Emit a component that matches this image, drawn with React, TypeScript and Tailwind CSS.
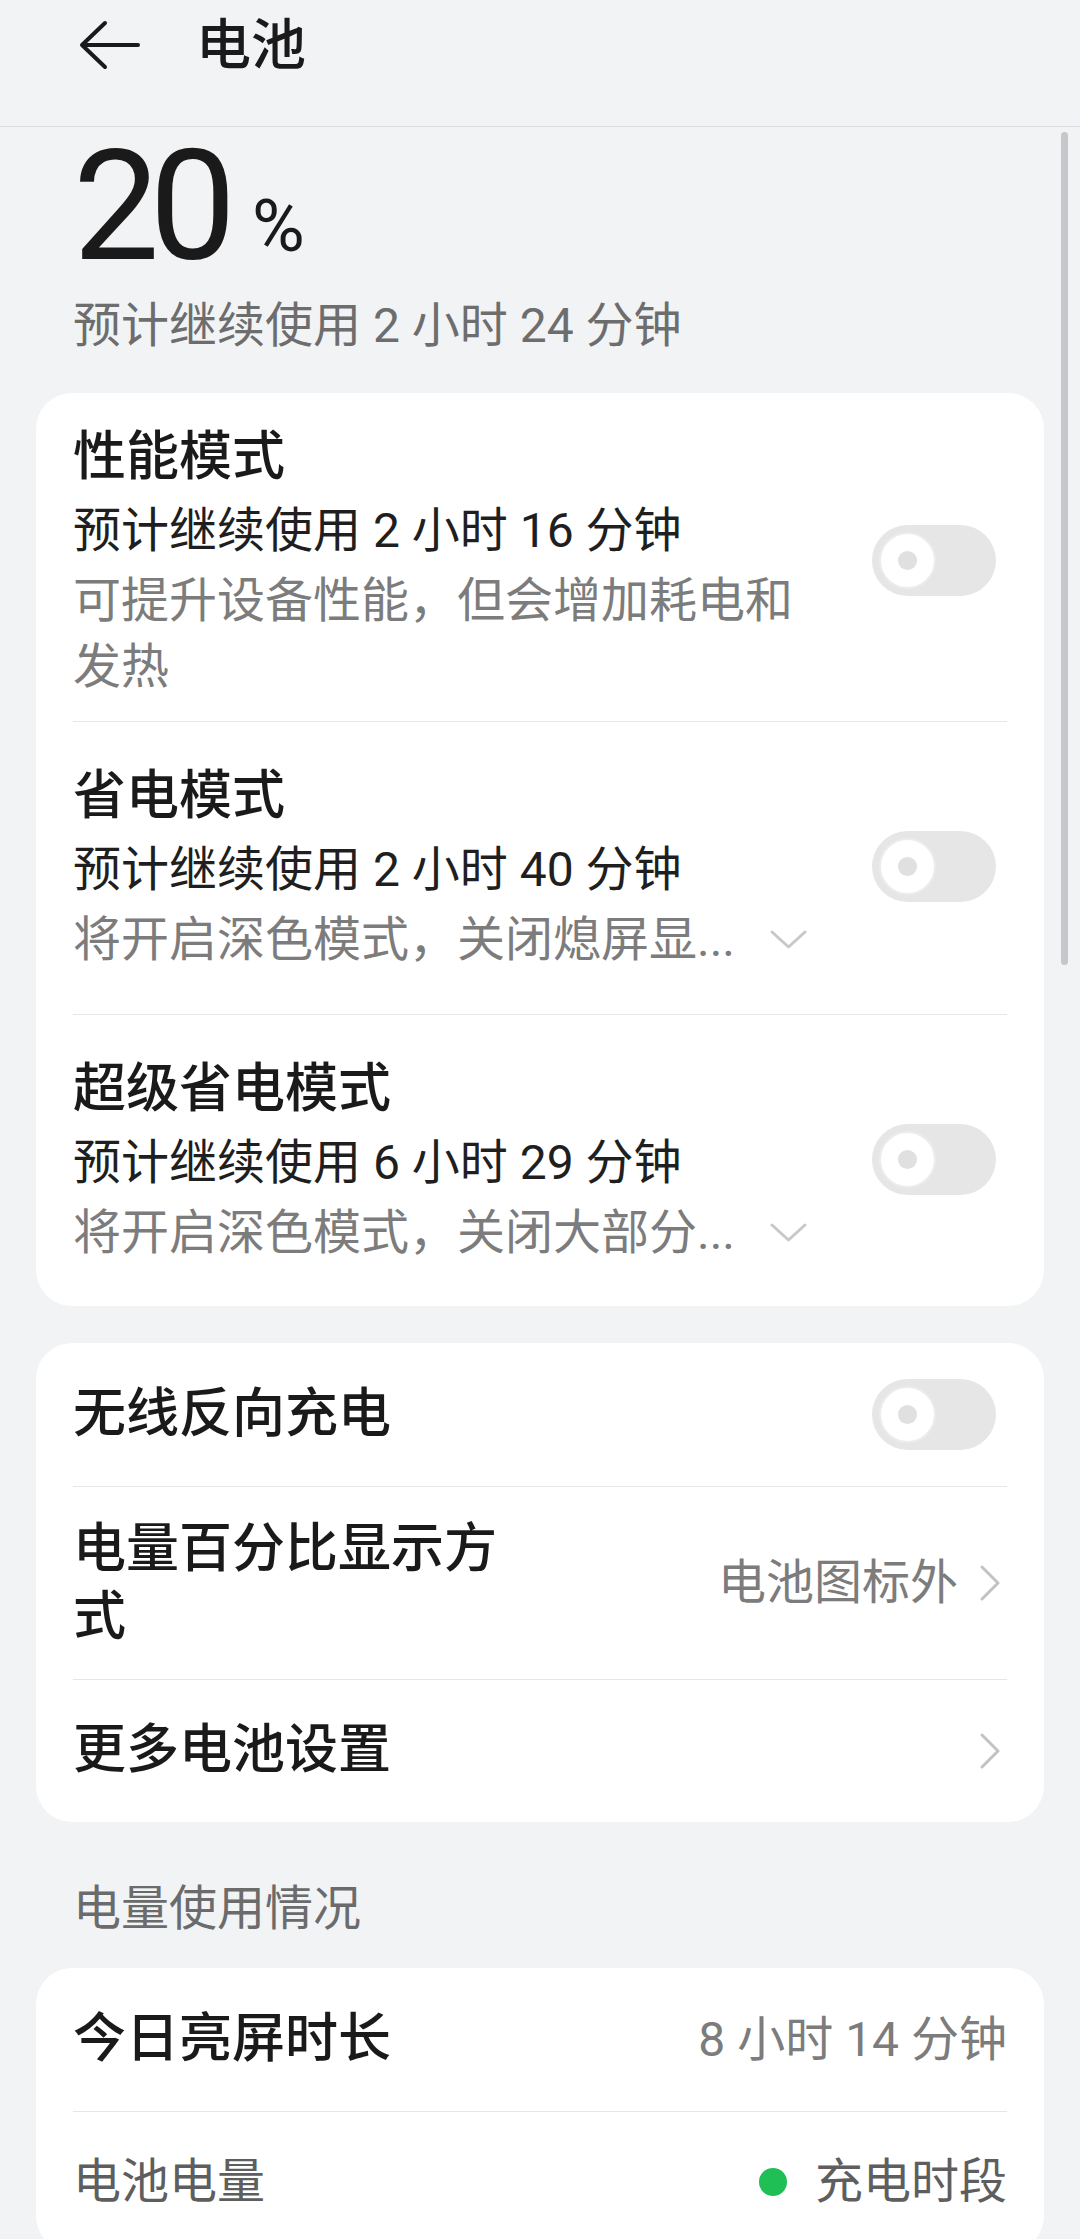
import React from "react";

const Toggle = () => (
  <div className="w-[124px] h-[71px] rounded-full bg-[#e6e6e6] flex items-center pl-[7px] shrink-0">
    <div className="w-[57px] h-[57px] rounded-full bg-white border-2 border-[#ececec] flex items-center justify-center">
      <div className="w-[19px] h-[19px] rounded-full bg-[#e0e0e0]" />
    </div>
  </div>
);

const ChevronDown = () => (
  <svg width="37" height="20" viewBox="0 0 37 20" className="shrink-0 ml-[35px]">
    <path d="M2 2 L18.5 17 L35 2" fill="none" stroke="#c8c8c8" strokeWidth="3" strokeLinecap="round" strokeLinejoin="round" />
  </svg>
);

const ChevronRight = () => (
  <svg width="20" height="36" viewBox="0 0 20 36" className="shrink-0">
    <path d="M2 2 L18 18 L2 34" fill="none" stroke="#c2c2c2" strokeWidth="3" strokeLinecap="round" strokeLinejoin="round" />
  </svg>
);

const Divider = () => <div className="h-px bg-[#e6e6e6]" />;

type Mode = {
  title: string;
  estimate: string;
  desc: string;
  folded: boolean;
  pad: string;
};

const modes: Mode[] = [
  {
    title: "性能模式",
    estimate: "预计继续使用 2 小时 16 分钟",
    desc: "可提升设备性能，但会增加耗电和发热",
    folded: false,
    pad: "pt-[27px] pb-[21px]",
  },
  {
    title: "省电模式",
    estimate: "预计继续使用 2 小时 40 分钟",
    desc: "将开启深色模式，关闭熄屏显...",
    folded: true,
    pad: "pt-[37px] pb-[41px]",
  },
  {
    title: "超级省电模式",
    estimate: "预计继续使用 6 小时 29 分钟",
    desc: "将开启深色模式，关闭大部分...",
    folded: true,
    pad: "pt-[37px] pb-[40px]",
  },
];

export default function App() {
  return (
    <div className="relative h-[2239px] w-[1080px] overflow-hidden bg-[#f1f3f5] text-[#1a1a1a] font-['Roboto','Noto_Sans_CJK_SC',sans-serif]">
      {/* header */}
      <header className="h-[127px] pb-[36px] flex items-center border-b border-[#dcdee1]">
        <svg width="62" height="50" viewBox="0 0 62 50" className="ml-[78px]">
          <path d="M60 25 H4 M27 3 L4 25 L27 47" fill="none" stroke="#1a1a1a" strokeWidth="4" strokeLinecap="round" strokeLinejoin="round" />
        </svg>
        <h1 className="ml-[56px] text-[55px] font-medium leading-none">电池</h1>
      </header>

      {/* scroll indicator */}
      <div className="absolute left-[1061px] top-[132px] w-[7px] h-[833px] rounded-full bg-[#c5c7ca]" />

      <div className="pl-[73px]">
        <div className="flex items-baseline">
          <span className="text-[154px] leading-[160px] tracking-[-10px]">20</span>
          <span className="ml-[26px] -translate-y-[8px] text-[72px] leading-none">%</span>
        </div>
        <p className="mt-[6px] text-[48px] leading-[66px] text-[#6d6d6d]">预计继续使用 2 小时 24 分钟</p>
      </div>

      {/* modes card */}
      <section className="mx-[36px] mt-[34px] rounded-[36px] bg-white px-[37px]">
        {modes.map((m, i) => (
          <div key={m.title}>
            {i > 0 && <Divider />}
            <div className={`flex items-center justify-between ${m.pad}`}>
              <div className="w-[740px]">
                <div className="text-[53px] font-medium leading-[74px]">{m.title}</div>
                <div className="text-[48px] leading-[74px] text-[#1f1f1f]">{m.estimate}</div>
                {m.folded ? (
                  <div className="flex items-center text-[48px] leading-[66px] text-[#7c7c7c]">
                    <span>{m.desc}</span>
                    <ChevronDown />
                  </div>
                ) : (
                  <div className="text-[48px] leading-[66px] text-[#7c7c7c]">{m.desc}</div>
                )}
              </div>
              <div className="mr-[11px]">
                <Toggle />
              </div>
            </div>
          </div>
        ))}
      </section>

      {/* settings card */}
      <section className="mx-[36px] mt-[37px] rounded-[36px] bg-white px-[37px]">
        <div className="h-[143px] flex items-center justify-between">
          <span className="text-[53px] font-medium">无线反向充电</span>
          <div className="mr-[11px]">
            <Toggle />
          </div>
        </div>
        <Divider />
        <div className="py-[28px] flex items-center justify-between">
          <span className="w-[440px] text-[53px] font-medium leading-[68px]">电量百分比显示方式</span>
          <div className="flex items-center gap-[22px] pr-[7px]">
            <span className="text-[48px] text-[#7c7c7c]">电池图标外</span>
            <ChevronRight />
          </div>
        </div>
        <Divider />
        <div className="h-[142px] flex items-center justify-between">
          <span className="text-[53px] font-medium">更多电池设置</span>
          <div className="pr-[7px]">
            <ChevronRight />
          </div>
        </div>
      </section>

      <h2 className="pl-[73px] pt-[54px] pb-[26px] text-[48px] leading-[66px] text-[#6b6b6b]">电量使用情况</h2>

      {/* usage card */}
      <section className="mx-[36px] rounded-[36px] bg-white px-[37px]">
        <div className="h-[143px] flex items-center justify-between">
          <span className="text-[53px] font-medium">今日亮屏时长</span>
          <span className="text-[48px] text-[#7c7c7c]">8 小时 14 分钟</span>
        </div>
        <Divider />
        <div className="h-[140px] flex items-center justify-between">
          <span className="text-[48px] text-[#5e5e5e]">电池电量</span>
          <div className="flex items-center">
            <span className="w-[28px] h-[28px] rounded-full bg-[#1fbf55]" />
            <span className="ml-[28px] text-[48px] text-[#5e5e5e]">充电时段</span>
          </div>
        </div>
      </section>
    </div>
  );
}
